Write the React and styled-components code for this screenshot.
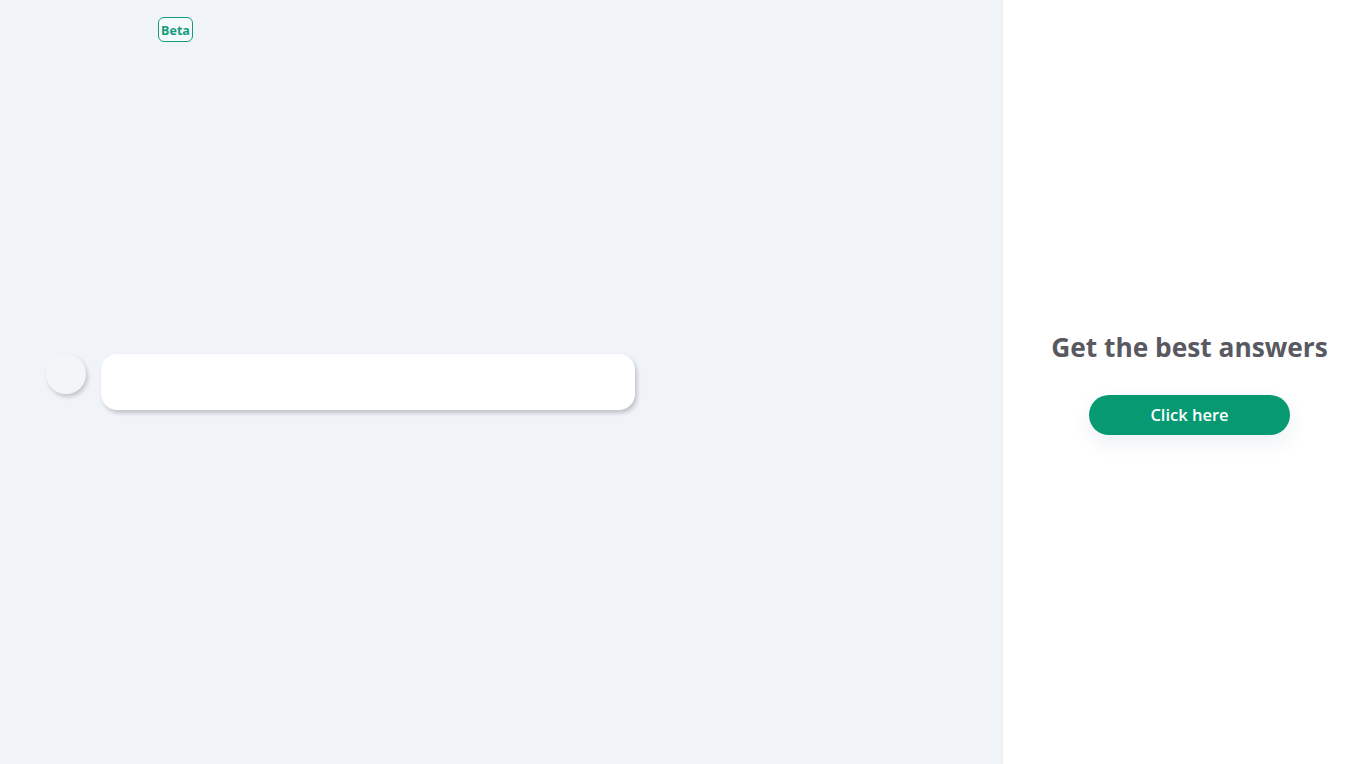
import React from "react";
import styled, { createGlobalStyle } from "styled-components";

const Global = createGlobalStyle`
  html, body { margin: 0; padding: 0; height: 100%; }
  body { font-family: "Open Sans", "Liberation Sans", sans-serif; }
  #root { height: 100%; }
`;

const Page = styled.div`
  display: flex;
  width: 1360px;
  height: 764px;
  overflow: hidden;
`;

const ChatPane = styled.main`
  position: relative;
  width: 1001px;
  flex: none;
  background: #f0f3f8;
  border-right: 2px solid #eceef2;
  display: flex;
  flex-direction: column;
`;

const TopBar = styled.header`
  height: 60px;
  padding: 17px 0 0 158px;
  box-sizing: border-box;
`;

const Badge = styled.span`
  display: inline-flex;
  align-items: center;
  justify-content: center;
  width: 35px;
  height: 25px;
  padding-top: 1px;
  box-sizing: border-box;
  border: 1.5px solid #139c7c;
  border-radius: 6px;
  color: #139c7c;
  font-size: 12.5px;
  font-weight: 700;
  background: #f6f9fb;
`;

const Thread = styled.div`
  flex: 1;
  display: flex;
  flex-direction: column;
  justify-content: center;
  padding: 0 0 60px 46px;
`;

const MessageRow = styled.div`
  display: flex;
  align-items: flex-start;
  gap: 15px;
`;

const Avatar = styled.div`
  width: 40px;
  height: 40px;
  border-radius: 50%;
  background: #f4f5f8;
  box-shadow: 2px 3px 4px rgba(0, 0, 0, 0.18);
  flex: none;
`;

const Bubble = styled.div`
  width: 534px;
  height: 56px;
  border-radius: 16px;
  background: #ffffff;
  box-shadow: 2px 3px 4px rgba(0, 0, 0, 0.2);
`;

const SidePane = styled.aside`
  flex: 1;
  background: #ffffff;
  display: flex;
  flex-direction: column;
  align-items: center;
  justify-content: center;
  padding-left: 16px;
`;

const Heading = styled.h2`
  margin: 0;
  font-size: 26.3px;
  font-weight: 700;
  color: #595961;
  line-height: 34px;
`;

const CtaButton = styled.button`
  margin-top: 31px;
  width: 201px;
  height: 40px;
  border: none;
  border-radius: 20px;
  background: #079a72;
  color: #ffffff;
  font-family: "Open Sans", "Liberation Sans", sans-serif;
  font-size: 16.5px;
  font-weight: 600;
  box-shadow: 0 8px 20px rgba(7, 60, 90, 0.08);
  cursor: pointer;
`;

export default function App() {
  return (
    <>
      <Global />
      <Page>
        <ChatPane>
          <TopBar>
            <Badge>Beta</Badge>
          </TopBar>
          <Thread>
            <MessageRow>
              <Avatar />
              <Bubble />
            </MessageRow>
          </Thread>
        </ChatPane>
        <SidePane>
          <Heading>Get the best answers</Heading>
          <CtaButton>Click here</CtaButton>
        </SidePane>
      </Page>
    </>
  );
}
